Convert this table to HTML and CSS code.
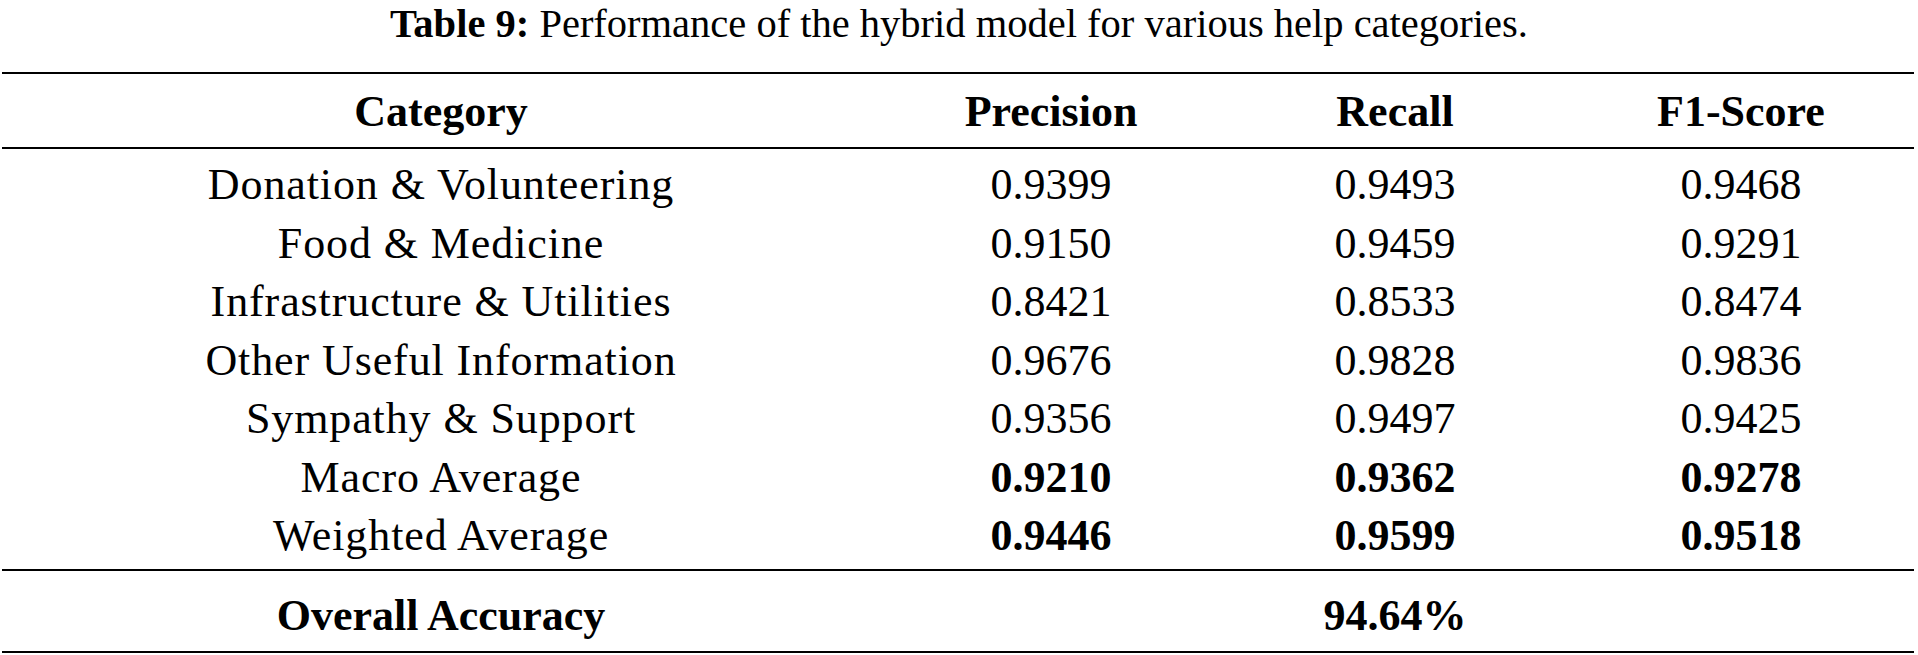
FILE: index.html
```html
<!doctype html>
<html lang="en">
<head>
  <meta charset="UTF-8">
  <title>Table 9</title>
  <link rel="stylesheet" href="styles.css">
</head>
<body>
  <p class="caption"><b>Table 9:</b> Performance of the hybrid model for various help categories.</p>
  <table class="results">
    <thead>
      <tr>
        <th>Category</th>
        <th>Precision</th>
        <th>Recall</th>
        <th>F1-Score</th>
      </tr>
    </thead>
    <tbody>
      <tr class="first"><td>Donation &amp; Volunteering</td><td>0.9399</td><td>0.9493</td><td>0.9468</td></tr>
      <tr><td>Food &amp; Medicine</td><td>0.9150</td><td>0.9459</td><td>0.9291</td></tr>
      <tr><td>Infrastructure &amp; Utilities</td><td>0.8421</td><td>0.8533</td><td>0.8474</td></tr>
      <tr><td>Other Useful Information</td><td>0.9676</td><td>0.9828</td><td>0.9836</td></tr>
      <tr><td>Sympathy &amp; Support</td><td>0.9356</td><td>0.9497</td><td>0.9425</td></tr>
      <tr class="avg"><td>Macro Average</td><td>0.9210</td><td>0.9362</td><td>0.9278</td></tr>
      <tr class="avg last"><td>Weighted Average</td><td>0.9446</td><td>0.9599</td><td>0.9518</td></tr>
    </tbody>
    <tfoot>
      <tr><th>Overall Accuracy</th><td></td><th>94.64%</th><td></td></tr>
    </tfoot>
  </table>
</body>
</html>
```

FILE: styles.css
```css
body { margin: 0; padding: 0; background: #fff; color: #000; font-family: "Liberation Serif", "Times New Roman", serif; }

.caption { margin: 0 0 25px 0; text-align: center; font-size: 40.5px; line-height: normal; }

.results { margin-left: 2px; width: 1912px; table-layout: fixed; border-collapse: separate; border-spacing: 0; border-top: 2px solid #000; border-bottom: 2px solid #000; font-size: 44px; }
.results th, .results td { padding: 0; text-align: center; white-space: nowrap; }
.results th:nth-child(1), .results td:nth-child(1) { width: 878px; }
.results th:nth-child(2), .results td:nth-child(2) { width: 342px; }
.results th:nth-child(3), .results td:nth-child(3) { width: 346px; }
.results th:nth-child(4), .results td:nth-child(4) { width: 346px; }

.results thead th { line-height: 71px; padding-top: 2px; border-bottom: 2px solid #000; }

.results tbody td { line-height: 58.5px; }
.results tbody td:first-child { letter-spacing: 0.9px; }
.results tbody tr.first td { padding-top: 7px; }
.results tbody tr.last td { padding-bottom: 3.5px; border-bottom: 2px solid #000; }
.results tbody tr.avg td + td { font-weight: bold; }

.results tfoot th, .results tfoot td { line-height: 71px; padding-top: 9px; }
```
